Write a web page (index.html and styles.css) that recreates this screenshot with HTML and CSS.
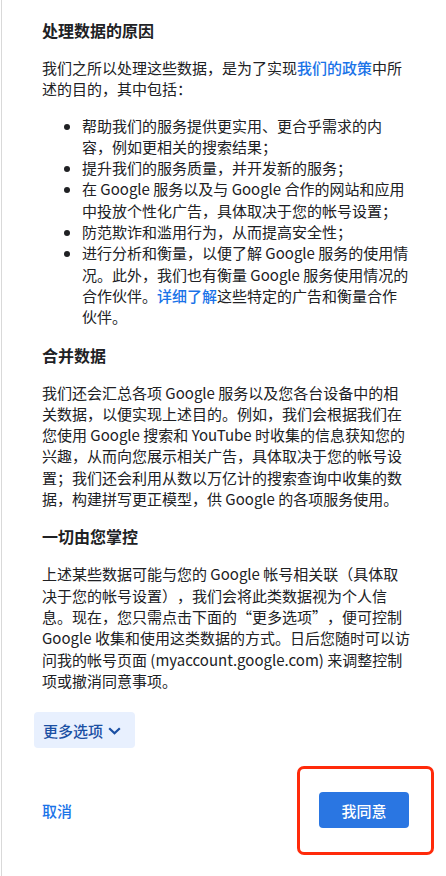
FILE: index.html
```html
<!DOCTYPE html>
<html lang="zh-CN">
<head>
<meta charset="utf-8">
<title>处理数据的原因</title>
<link rel="stylesheet" href="styles.css">
</head>
<body>
<div class="panel">
  <section class="block">
    <h2 class="title">处理数据的原因</h2>
    <p class="text">我们之所以处理这些数据，是为了实现<a class="link" href="#">我们的政策</a>中所述的目的，其中包括：</p>
    <ul class="list">
      <li>帮助我们的服务提供更实用、更合乎需求的内容，例如更相关的搜索结果；</li>
      <li>提升我们的服务质量，并开发新的服务；</li>
      <li>在 Google 服务以及与 Google 合作的网站和应用中投放个性化广告，具体取决于您的帐号设置；</li>
      <li>防范欺诈和滥用行为，从而提高安全性；</li>
      <li>进行分析和衡量，以便了解 Google 服务的使用情况。此外，我们也有衡量 Google 服务使用情况的合作伙伴。<a class="link" href="#">详细了解</a>这些特定的广告和衡量合作伙伴。</li>
    </ul>
  </section>
  <section class="block">
    <h2 class="title">合并数据</h2>
    <p class="text">我们还会汇总各项 Google 服务以及您各台设备中的相关数据，以便实现上述目的。例如，我们会根据我们在您使用 Google 搜索和 YouTube 时收集的信息获知您的兴趣，从而向您展示相关广告，具体取决于您的帐号设置；我们还会利用从数以万亿计的搜索查询中收集的数据，构建拼写更正模型，供 Google 的各项服务使用。</p>
  </section>
  <section class="block">
    <h2 class="title">一切由您掌控</h2>
    <p class="text">上述某些数据可能与您的 Google 帐号相关联（具体取决于您的帐号设置），我们会将此类数据视为个人信息。现在，您只需点击下面的“更多选项”，便可控制 Google 收集和使用这类数据的方式。日后您随时可以访问我的帐号页面 (myaccount.google.com) 来调整控制项或撤消同意事项。</p>
  </section>
  <button class="more" type="button">更多选项<svg class="chev" width="13" height="8" viewBox="0 0 13 8" aria-hidden="true"><path d="M1.2 1.2 L6.5 6.3 L11.8 1.2" fill="none" stroke="currentColor" stroke-width="2.2"/></svg></button>
  <div class="actions">
    <button class="cancel" type="button">取消</button>
    <div class="agree-wrap">
      <button class="agree" type="button">我同意</button>
      <span class="highlight"></span>
    </div>
  </div>
</div>
</body>
</html>
```
FILE: styles.css
```css
html, body {
  margin: 0;
  padding: 0;
  background: #ffffff;
}
body {
  font-family: "Noto Sans CJK SC", "Noto Sans", sans-serif;
  color: #202124;
  font-size: 15px;
  line-height: 21.3px;
  text-spacing-trim: space-all;
}
.panel {
  margin-left: 1px;
  border-left: 1px solid #d9d9d9;
  min-height: 876px;
  box-sizing: border-box;
  padding: 18px 35px 0 40px;
}
.block {
  margin: 0 0 15px 0;
}
.title {
  margin: 0 0 15px 0;
  font-size: 16px;
  line-height: 24px;
  font-weight: 700;
  color: #202124;
}
.text {
  margin: 0 0 15px 0;
}
.link {
  color: #1a73e8;
  text-decoration: none;
  font-weight: 500;
}
.list {
  margin: 0 0 15px 0;
  padding-left: 40px;
}
.list li {
  padding: 0;
}
.block:last-of-type .text {
  margin-bottom: 0;
}
.more {
  display: inline-flex;
  align-items: center;
  gap: 5px;
  margin: 6px 0 0 -8px;
  height: 36px;
  padding: 0 14px 0 9px;
  border: none;
  border-radius: 4px;
  background: #e8f0fe;
  color: #1a4fa3;
  font-family: inherit;
  font-size: 15px;
  font-weight: 500;
  cursor: pointer;
}
.chev {
  display: block;
  margin-top: 1px;
}
.actions {
  display: flex;
  align-items: center;
  justify-content: space-between;
  margin-top: 44px;
  margin-right: 2px;
}
.cancel {
  border: none;
  background: none;
  padding: 0;
  color: #1a73e8;
  font-family: inherit;
  font-size: 15px;
  font-weight: 500;
  cursor: pointer;
}
.agree-wrap {
  position: relative;
}
.agree {
  display: block;
  width: 90px;
  height: 36px;
  border: none;
  border-radius: 4px;
  background: #2a76e2;
  color: #ffffff;
  font-family: inherit;
  font-size: 15px;
  font-weight: 500;
  cursor: pointer;
}
.highlight {
  position: absolute;
  left: -22px;
  top: -26px;
  width: 137px;
  height: 89px;
  box-sizing: border-box;
  border: 3px solid #ff2a0a;
  border-radius: 7px;
  pointer-events: none;
}
```
